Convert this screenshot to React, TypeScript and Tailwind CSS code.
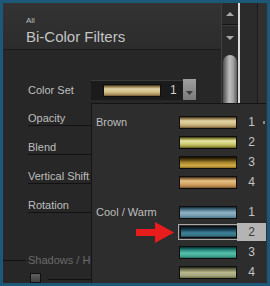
import React from "react";

type Sw = { label?: string; n: number; bg: string; selected?: boolean };

const brown: Sw[] = [
  { label: "Brown", n: 1, bg: "bg-[linear-gradient(to_bottom,#3a2e18_0%,#8a7548_14%,#e2d4a6_35%,#d4c08a_65%,#9c8450_92%,#5a4828_100%)]" },
  { n: 2, bg: "bg-[linear-gradient(to_bottom,#2e2c10_0%,#8a8638_14%,#e6e6a4_35%,#cccb74_65%,#918b32_92%,#4a4614_100%)]" },
  { n: 3, bg: "bg-[linear-gradient(to_bottom,#140e02_0%,#3e300a_18%,#a8852a_50%,#d2ae48_80%,#8a6a20_100%)]" },
  { n: 4, bg: "bg-[linear-gradient(to_bottom,#3a2812_0%,#8e6a3c_14%,#e6c084_35%,#d4a466_65%,#a47642_92%,#5a3e20_100%)]" },
];

const cool: Sw[] = [
  { label: "Cool / Warm", n: 1, bg: "bg-[linear-gradient(to_bottom,#122430_0%,#3e6478_18%,#8cb2c2_50%,#7aa2b2_75%,#4c7686_100%)]" },
  { n: 2, bg: "bg-[linear-gradient(to_bottom,#061820_0%,#163c50_25%,#3f8299_60%,#36707f_88%,#1a3a48_100%)]", selected: true },
  { n: 3, bg: "bg-[linear-gradient(to_bottom,#052a2a_0%,#1e7a72_22%,#58c0ac_55%,#3ea48e_85%,#236a5c_100%)]" },
  { n: 4, bg: "bg-[linear-gradient(to_bottom,#202010_0%,#6c6c4c_20%,#b8b890_50%,#a4a47c_80%,#6a6a48_100%)]" },
];

function PopRow({ s }: { s: Sw }) {
  return (
    <div className="flex h-[20px] items-center">
      <div className="w-[87px] pl-[4px] text-[11px] leading-[14px] text-[#bdbdbd] whitespace-nowrap">
        {s.label ?? ""}
      </div>
      {s.selected ? (
        <div className="-ml-px flex h-[16px] w-[60px] items-center justify-center border border-[#a8a8a8]">
          <div className={`h-[12px] w-[57px] border border-[#0e0e0e] ${s.bg}`} />
        </div>
      ) : (
        <div className={`h-[13px] w-[58px] border border-[#0e0e0e] ${s.bg}`} />
      )}
      {s.selected ? (
        <div className="ml-[-1px] flex h-[18px] w-[29px] items-center justify-center bg-[#b4b4b4] text-[12px] leading-[14px] text-[#3c3c3c]">
          {s.n}
        </div>
      ) : (
        <div className="flex w-[29px] items-center justify-center text-[12px] leading-[14px] text-[#c4c4c4]">
          {s.n}
        </div>
      )}
    </div>
  );
}

function LabelRow({ label, h }: { label: string; h: string }) {
  return (
    <div className={`ml-[25px] flex items-end border-b border-[#121212] ${h}`}>
      <span className="text-[11px] leading-[14px] text-[#bfbfbf] whitespace-nowrap">{label}</span>
    </div>
  );
}

export default function App() {
  return (
    <div className="h-[286px] w-[270px] overflow-hidden bg-[#1d5878] p-[3px] font-['Liberation_Sans',Arial,sans-serif]">
      <div className="relative flex h-[280px] w-[264px] overflow-hidden">
        {/* left panel */}
        <div className="flex w-[218px] flex-col bg-[#272727]">
          <div className="h-[50px] border-b border-[#1a1a1a] bg-[linear-gradient(to_bottom,#333333,#2c2c2c)] pl-[23px] pt-[13px]">
            <div className="text-[8px] leading-[10px] text-[#bcbcbc]">All</div>
            <div className="mt-[2px] text-[15px] leading-[17px] text-[#c4c4c4]">Bi-Color Filters</div>
          </div>
          <div className="flex flex-col pt-[29px]">
            <div className="flex h-[21px] items-center pl-[25px]">
              <span className="w-[63px] text-[11px] leading-[14px] text-[#bfbfbf] whitespace-nowrap">Color Set</span>
              <div className="flex h-[20px] w-[92px] items-center border-t border-[#3a3a3a] bg-[#1b1b1b]">
                <div className="ml-[12px] h-[13px] w-[58px] border border-[#0e0e0e] bg-[linear-gradient(to_bottom,#3a2e18_0%,#8a7548_14%,#e0d2a4_35%,#d2be88_65%,#9c8450_92%,#5a4828_100%)]" />
                <span className="ml-[9px] text-[12px] leading-[14px] text-[#d0d0d0]">1</span>
              </div>
              <div className="flex h-[21px] w-[13px] items-end justify-center bg-[linear-gradient(to_bottom,#a0a0a0,#7a7a7a)] pb-[5px]">
                <svg width="7" height="4" viewBox="0 0 7 4">
                  <path d="M0 0 L7 0 L3.5 4 Z" fill="#3a3a3a" />
                </svg>
              </div>
            </div>
            <LabelRow label="Opacity" h="h-[26px]" />
            <LabelRow label="Blend" h="h-[29px]" />
            <LabelRow label="Vertical Shift" h="h-[29px]" />
            <LabelRow label="Rotation" h="h-[29px]" />
            <div className="mt-[40px] flex h-[14px] items-center">
              <div className="h-px w-[23px] bg-[#101010]" />
              <span className="ml-[2px] text-[11px] leading-[14px] text-[#6a6a6a] whitespace-nowrap">Shadows / Highlights</span>
            </div>
            <div className="mt-[6px] flex">
              <div className="ml-[27px] h-[10px] w-[11px] border border-[#111] bg-[linear-gradient(to_bottom,#606060,#404040)]" />
              <div className="ml-[7px] mt-[6px] h-px w-[44px] bg-[#111]" />
            </div>
          </div>
        </div>

        {/* scrollbar */}
        <div className="flex w-[17px] flex-col border-l border-[#404040] bg-[#2a2a2a]">
          <div className="flex h-[22px] items-center justify-center border-b border-[#161616]">
            <svg width="8" height="4" viewBox="0 0 8 4">
              <path d="M0 4 L8 4 L4 0 Z" fill="#a8a8a8" />
            </svg>
          </div>
          <div className="flex h-[25px] items-center justify-center border-t border-[#3a3a3a]">
            <svg width="8" height="4" viewBox="0 0 8 4">
              <path d="M0 0 L8 0 L4 4 Z" fill="#a8a8a8" />
            </svg>
          </div>
          <div className="ml-[1px] mt-[5px] h-[80px] w-[14px] rounded-t-[7px] bg-[linear-gradient(to_right,#4e4e4e,#bcbcbc_45%,#a6a6a6_70%,#5e5e5e)]" />
        </div>
        <div className="w-[2px] bg-[#dcdcdc]" />
        <div className="w-[18px] border-r border-[#1a1a1a] bg-[#2b2b2b]" />
        <div className="w-[9px] bg-[#303030]" />

        {/* dropdown popup */}
        <div className="absolute bottom-0 left-[88px] right-[1px] top-[100px] border-l border-t border-[#141414] bg-[#2d2d2d] pt-[8px]">
          {brown.map((s) => (
            <PopRow key={"b" + s.n} s={s} />
          ))}
          <div className="h-[10px]" />
          {cool.map((s) => (
            <PopRow key={"c" + s.n} s={s} />
          ))}
          <div className="absolute right-[1px] top-[17px] h-[3px] w-[2px] bg-[#8a8a8a]" />
        </div>

        {/* red arrow */}
        <svg className="absolute left-[133px] top-[219px]" width="38" height="21" viewBox="0 0 38 21">
          <path d="M0 7 L19 7 L19 0 L38 10.5 L19 21 L19 14 L0 14 Z" fill="#e81c1c" />
        </svg>
      </div>
    </div>
  );
}
